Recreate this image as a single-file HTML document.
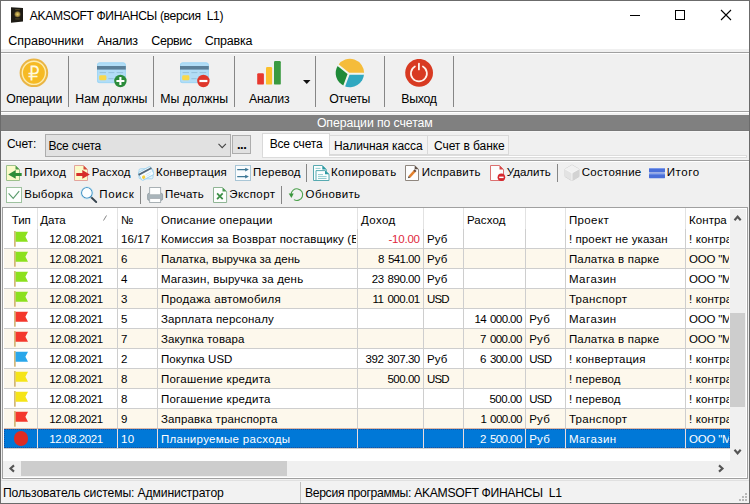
<!DOCTYPE html><html><head><meta charset="utf-8"><title>AKAMSOFT ФИНАНСЫ</title><style>
html,body{margin:0;padding:0;background:#fff}
#w{position:relative;width:750px;height:504px;overflow:hidden;font-family:"Liberation Sans", sans-serif;font-size:11.5px}
#w>div,#w>svg,#w>span{position:absolute;display:block}
#w>span{white-space:pre;line-height:14px;height:14px}
</style></head><body><div id="w">
<div style="left:0px;top:0px;width:750px;height:504px;background:#fff;"></div>
<div style="left:1px;top:49px;width:748px;height:3px;background:#f0f0f0;"></div>
<div style="left:1px;top:52px;width:748px;height:1px;background:#a0a0a0;"></div>
<div style="left:1px;top:53px;width:748px;height:1px;background:#ffffff;"></div>
<div style="left:1px;top:54px;width:748px;height:57px;background:#f0f0f0;"></div>
<div style="left:1px;top:111px;width:748px;height:1px;background:#a0a0a0;"></div>
<div style="left:1px;top:112px;width:748px;height:1px;background:#ffffff;"></div>
<div style="left:1px;top:113px;width:748px;height:391px;background:#f0f0f0;"></div>
<div style="left:68px;top:56px;width:1px;height:51px;background:#868686;"></div>
<div style="left:153px;top:56px;width:1px;height:51px;background:#868686;"></div>
<div style="left:234px;top:56px;width:1px;height:51px;background:#868686;"></div>
<div style="left:315px;top:56px;width:1px;height:51px;background:#868686;"></div>
<div style="left:384px;top:56px;width:1px;height:51px;background:#868686;"></div>
<div style="left:453px;top:56px;width:1px;height:51px;background:#868686;"></div>
<div style="left:1px;top:115px;width:748px;height:16px;background:#808080;"></div>
<div style="left:1px;top:130px;width:748px;height:1px;background:#787878;"></div>
<div style="left:1px;top:131px;width:748px;height:1px;background:#f6f6f6;"></div>
<div style="left:45px;top:134px;width:186px;height:23px;background:#e1e1e1;border:1px solid #adadad;box-sizing:border-box;"></div>
<div style="left:232px;top:135px;width:19px;height:19px;background:#e1e1e1;border:1px solid #adadad;box-sizing:border-box;"></div>
<div style="left:262px;top:133px;width:68px;height:24px;background:#ffffff;border:1px solid #d9d9d9;border-bottom:none;box-sizing:border-box;"></div>
<div style="left:330px;top:135px;width:98px;height:20px;background:#f3f3f3;border:1px solid #d9d9d9;border-left:none;box-sizing:border-box;"></div>
<div style="left:428px;top:135px;width:81px;height:20px;background:#f3f3f3;border:1px solid #d9d9d9;border-left:none;box-sizing:border-box;"></div>
<div style="left:330px;top:155px;width:417px;height:1px;background:#dcdcdc;"></div>
<div style="left:262px;top:156px;width:484px;height:1px;background:#ffffff;"></div>
<div style="left:262px;top:157px;width:485px;height:1px;background:#dcdcdc;"></div>
<div style="left:746px;top:155px;width:1px;height:3px;background:#dcdcdc;"></div>
<div style="left:262px;top:155px;width:1px;height:3px;background:#dcdcdc;"></div>
<div style="left:1px;top:160px;width:748px;height:1px;background:#a0a0a0;"></div>
<div style="left:1px;top:161px;width:748px;height:1px;background:#ffffff;"></div>
<div style="left:306px;top:164px;width:1px;height:18px;background:#868686;"></div>
<div style="left:557px;top:164px;width:1px;height:18px;background:#868686;"></div>
<div style="left:140px;top:186px;width:1px;height:18px;background:#868686;"></div>
<div style="left:281px;top:186px;width:1px;height:18px;background:#868686;"></div>
<div style="left:2px;top:207px;width:746px;height:272px;background:#a0a0a0;"></div>
<div style="left:3px;top:208px;width:744px;height:270px;background:#ffffff;"></div>
<div style="left:4px;top:249px;width:726px;height:19px;background:#fdf8ec;"></div>
<div style="left:4px;top:289px;width:726px;height:19px;background:#fdf8ec;"></div>
<div style="left:4px;top:329px;width:726px;height:19px;background:#fdf8ec;"></div>
<div style="left:4px;top:369px;width:726px;height:19px;background:#fdf8ec;"></div>
<div style="left:4px;top:409px;width:726px;height:19px;background:#fdf8ec;"></div>
<div style="left:4px;top:429px;width:726px;height:19px;background:#0078d7;"></div>
<div style="left:4px;top:248px;width:726px;height:1px;background:#cecece;"></div>
<div style="left:4px;top:268px;width:726px;height:1px;background:#cecece;"></div>
<div style="left:4px;top:288px;width:726px;height:1px;background:#cecece;"></div>
<div style="left:4px;top:308px;width:726px;height:1px;background:#cecece;"></div>
<div style="left:4px;top:328px;width:726px;height:1px;background:#cecece;"></div>
<div style="left:4px;top:348px;width:726px;height:1px;background:#cecece;"></div>
<div style="left:4px;top:368px;width:726px;height:1px;background:#cecece;"></div>
<div style="left:4px;top:388px;width:726px;height:1px;background:#cecece;"></div>
<div style="left:4px;top:408px;width:726px;height:1px;background:#cecece;"></div>
<div style="left:4px;top:428px;width:726px;height:1px;background:#cecece;"></div>
<div style="left:4px;top:448px;width:726px;height:1px;background:#cecece;"></div>
<div style="left:37px;top:208px;width:1px;height:21px;background:#e2e2e2;"></div>
<div style="left:37px;top:229px;width:1px;height:220px;background:#cecece;"></div>
<div style="left:117px;top:208px;width:1px;height:21px;background:#e2e2e2;"></div>
<div style="left:117px;top:229px;width:1px;height:220px;background:#cecece;"></div>
<div style="left:157px;top:208px;width:1px;height:21px;background:#e2e2e2;"></div>
<div style="left:157px;top:229px;width:1px;height:220px;background:#cecece;"></div>
<div style="left:357px;top:208px;width:1px;height:21px;background:#e2e2e2;"></div>
<div style="left:357px;top:229px;width:1px;height:220px;background:#cecece;"></div>
<div style="left:423px;top:208px;width:1px;height:21px;background:#e2e2e2;"></div>
<div style="left:423px;top:229px;width:1px;height:220px;background:#cecece;"></div>
<div style="left:463px;top:208px;width:1px;height:21px;background:#e2e2e2;"></div>
<div style="left:463px;top:229px;width:1px;height:220px;background:#cecece;"></div>
<div style="left:525px;top:208px;width:1px;height:21px;background:#e2e2e2;"></div>
<div style="left:525px;top:229px;width:1px;height:220px;background:#cecece;"></div>
<div style="left:565px;top:208px;width:1px;height:21px;background:#e2e2e2;"></div>
<div style="left:565px;top:229px;width:1px;height:220px;background:#cecece;"></div>
<div style="left:685px;top:208px;width:1px;height:21px;background:#e2e2e2;"></div>
<div style="left:685px;top:229px;width:1px;height:220px;background:#cecece;"></div>
<div style="left:4px;top:429px;width:726px;height:19px;background:transparent;border:1px dotted #1c4f9e;box-sizing:border-box;"></div>
<div style="left:4px;top:428px;width:726px;height:1px;background:#dcb8a8;"></div>
<div style="left:37px;top:429px;width:1px;height:19px;background:#ecdcdc;"></div>
<div style="left:117px;top:429px;width:1px;height:19px;background:#ecdcdc;"></div>
<div style="left:157px;top:429px;width:1px;height:19px;background:#ecdcdc;"></div>
<div style="left:357px;top:429px;width:1px;height:19px;background:#ecdcdc;"></div>
<div style="left:423px;top:429px;width:1px;height:19px;background:#ecdcdc;"></div>
<div style="left:463px;top:429px;width:1px;height:19px;background:#ecdcdc;"></div>
<div style="left:525px;top:429px;width:1px;height:19px;background:#ecdcdc;"></div>
<div style="left:565px;top:429px;width:1px;height:19px;background:#ecdcdc;"></div>
<div style="left:685px;top:429px;width:1px;height:19px;background:#ecdcdc;"></div>
<svg style="left:14px;top:231px" width="15" height="16" viewBox="0 0 15 16"><rect x="0.2" y="0" width="1.4" height="15.7" fill="#c9a85c"/><path d="M1.6 0.8 L14 0.8 L11.4 5.8 L14 10.8 L1.6 10.8 Z" fill="#8ce01e"/></svg>
<svg style="left:14px;top:251px" width="15" height="16" viewBox="0 0 15 16"><rect x="0.2" y="0" width="1.4" height="15.7" fill="#c9a85c"/><path d="M1.6 0.8 L14 0.8 L11.4 5.8 L14 10.8 L1.6 10.8 Z" fill="#8ce01e"/></svg>
<svg style="left:14px;top:271px" width="15" height="16" viewBox="0 0 15 16"><rect x="0.2" y="0" width="1.4" height="15.7" fill="#c9a85c"/><path d="M1.6 0.8 L14 0.8 L11.4 5.8 L14 10.8 L1.6 10.8 Z" fill="#8ce01e"/></svg>
<svg style="left:14px;top:291px" width="15" height="16" viewBox="0 0 15 16"><rect x="0.2" y="0" width="1.4" height="15.7" fill="#c9a85c"/><path d="M1.6 0.8 L14 0.8 L11.4 5.8 L14 10.8 L1.6 10.8 Z" fill="#8ce01e"/></svg>
<svg style="left:14px;top:311px" width="15" height="16" viewBox="0 0 15 16"><rect x="0.2" y="0" width="1.4" height="15.7" fill="#c9a85c"/><path d="M1.6 0.8 L14 0.8 L11.4 5.8 L14 10.8 L1.6 10.8 Z" fill="#f4382c"/></svg>
<svg style="left:14px;top:331px" width="15" height="16" viewBox="0 0 15 16"><rect x="0.2" y="0" width="1.4" height="15.7" fill="#c9a85c"/><path d="M1.6 0.8 L14 0.8 L11.4 5.8 L14 10.8 L1.6 10.8 Z" fill="#f4382c"/></svg>
<svg style="left:14px;top:351px" width="15" height="16" viewBox="0 0 15 16"><rect x="0.2" y="0" width="1.4" height="15.7" fill="#c9a85c"/><path d="M1.6 0.8 L14 0.8 L11.4 5.8 L14 10.8 L1.6 10.8 Z" fill="#2aa7ea"/></svg>
<svg style="left:14px;top:371px" width="15" height="16" viewBox="0 0 15 16"><rect x="0.2" y="0" width="1.4" height="15.7" fill="#c9a85c"/><path d="M1.6 0.8 L14 0.8 L11.4 5.8 L14 10.8 L1.6 10.8 Z" fill="#f5e418"/></svg>
<svg style="left:14px;top:391px" width="15" height="16" viewBox="0 0 15 16"><rect x="0.2" y="0" width="1.4" height="15.7" fill="#c9a85c"/><path d="M1.6 0.8 L14 0.8 L11.4 5.8 L14 10.8 L1.6 10.8 Z" fill="#f5e418"/></svg>
<svg style="left:14px;top:411px" width="15" height="16" viewBox="0 0 15 16"><rect x="0.2" y="0" width="1.4" height="15.7" fill="#c9a85c"/><path d="M1.6 0.8 L14 0.8 L11.4 5.8 L14 10.8 L1.6 10.8 Z" fill="#f4382c"/></svg>
<div style="left:13.6px;top:431.4px;width:14.4px;height:14.4px;border-radius:7.2px;background:#dc2c24"></div>
<div style="left:730px;top:209px;width:16px;height:252px;background:#f0f0f0;"></div>
<div style="left:730px;top:313px;width:15px;height:94px;background:#cdcdcd;"></div>
<svg style="left:733px;top:214px" width="9" height="8" viewBox="0 0 9 8"><path d="M1.5 6.2 L4.6 2.7 L7.7 6.2" stroke="#555" stroke-width="2.1" fill="none"/></svg>
<svg style="left:733px;top:448px" width="9" height="8" viewBox="0 0 9 8"><path d="M1.5 1.8 L4.6 5.3 L7.7 1.8" stroke="#555" stroke-width="2.1" fill="none"/></svg>
<div style="left:3px;top:461px;width:743px;height:16px;background:#f0f0f0;"></div>
<div style="left:21px;top:461px;width:266px;height:15px;background:#cdcdcd;"></div>
<svg style="left:8px;top:464px" width="8" height="9" viewBox="0 0 8 9"><path d="M6 1.4 L2.5 4.5 L6 7.6" stroke="#555" stroke-width="2.1" fill="none"/></svg>
<svg style="left:717px;top:464px" width="8" height="9" viewBox="0 0 8 9"><path d="M2 1.4 L5.5 4.5 L2 7.6" stroke="#555" stroke-width="2.1" fill="none"/></svg>
<div style="left:1px;top:479px;width:748px;height:25px;background:#f2f2f2;"></div>
<div style="left:1px;top:480px;width:748px;height:1px;background:#e0e0e0;"></div>
<div style="left:300px;top:482px;width:1px;height:21px;background:#c0c0c0;"></div>
<svg style="left:11px;top:7px" width="13" height="16" viewBox="0 0 13 16"><defs><radialGradient id="gd"><stop offset="0" stop-color="#e6d070"/><stop offset="0.6" stop-color="#a89040"/><stop offset="1" stop-color="#3a3220"/></radialGradient></defs><path d="M0 0.2 L12 1 V14.6 L0 15.7 Z" fill="#1d1b15"/><circle cx="6.5" cy="7.3" r="3.3" fill="url(#gd)"/><rect x="4.2" y="2.4" width="4.6" height="0.7" fill="#6a5c30"/><rect x="4.2" y="11.6" width="4.6" height="0.7" fill="#6a5c30"/></svg>
<svg style="left:625px;top:5px" width="120" height="20" viewBox="0 0 120 20"><path d="M5 10.5 H15" stroke="#000" stroke-width="1"/><rect x="50.5" y="5.5" width="9" height="9" fill="none" stroke="#000" stroke-width="1"/><path d="M96 5 L106 15 M106 5 L96 15" stroke="#000" stroke-width="1.1"/></svg>
<svg style="left:19px;top:58px" width="30" height="30" viewBox="0 0 30 30"><circle cx="14.9" cy="14.8" r="14.3" fill="#eab544"/><circle cx="14.9" cy="14.8" r="11.6" fill="#f6ba24" stroke="#fdedb0" stroke-width="1.4"/><text x="0" y="22" font-family="DejaVu Sans, sans-serif" font-weight="200" font-size="19.6" fill="#fff9dc" stroke="#fff9dc" stroke-width="0.9" transform="translate(9.6 0) scale(0.88 1)">₽</text></svg>
<svg style="left:96.6px;top:62px" width="31" height="27" viewBox="0 0 31 27"><rect x="0" y="0.4" width="28.8" height="20.7" rx="2.6" fill="#b2ddf6"/><rect x="0.4" y="0.8" width="28" height="19.9" rx="2.3" fill="none" stroke="#9ad4f4" stroke-width="0.8"/><rect x="0" y="4" width="28.8" height="3.6" fill="#5b7f98"/><rect x="2.2" y="13.3" width="7.2" height="5" rx="1.4" fill="#f8d84a"/><path d="M2.6 10.6 H9 M11.4 10.6 H17.4 M19.6 10.6 H26.2 M11.4 16.7 H16.6" stroke="#8fbcd8" stroke-width="0.9"/><circle cx="23.4" cy="19" r="6.2" fill="#2b8c3b"/><path d="M23.4 15 V23 M19.4 19 H27.4" stroke="#fff" stroke-width="2.1"/></svg>
<svg style="left:179.6px;top:62px" width="31" height="27" viewBox="0 0 31 27"><rect x="0" y="0.4" width="28.8" height="20.7" rx="2.6" fill="#b2ddf6"/><rect x="0.4" y="0.8" width="28" height="19.9" rx="2.3" fill="none" stroke="#9ad4f4" stroke-width="0.8"/><rect x="0" y="4" width="28.8" height="3.6" fill="#5b7f98"/><rect x="2.2" y="13.3" width="7.2" height="5" rx="1.4" fill="#f8d84a"/><path d="M2.6 10.6 H9 M11.4 10.6 H17.4 M19.6 10.6 H26.2 M11.4 16.7 H16.6" stroke="#8fbcd8" stroke-width="0.9"/><circle cx="23.4" cy="19" r="6.2" fill="#df372b"/><path d="M19.4 19 H27.4" stroke="#fff" stroke-width="2.2"/></svg>
<svg style="left:256px;top:60px" width="26" height="26" viewBox="0 0 26 26"><rect x="1.2" y="13.2" width="6.7" height="11.4" rx="1.2" fill="#e8382e"/><rect x="10" y="7" width="6.1" height="17.6" rx="1.2" fill="#fbc02d"/><rect x="18" y="1.1" width="6.8" height="23.5" rx="1.2" fill="#3a9a40"/></svg>
<svg style="left:302.8px;top:80px" width="8" height="5" viewBox="0 0 8 5"><path d="M0 0 H7.5 L3.75 4.1 Z" fill="#111"/></svg>
<svg style="left:335px;top:58px" width="30" height="30" viewBox="0 0 30 30"><path d="M13.8 15.7 L3.07 7.15 A14.2 14.2 0 0 1 29.08 15.7 Z" fill="#f5bc3a"/><path d="M13.8 15.7 L9.18 27.99 A14.2 14.2 0 0 1 3.07 7.15 Z" fill="#1e8a38"/><path d="M13.8 15.7 L29.08 15.7 A14.2 14.2 0 0 1 9.18 27.99 Z" fill="#30a8c0"/><path d="M13.8 15.7 L2.6 6.8 M13.8 15.7 H29.6 M13.8 15.7 L9 28.5" stroke="#f1f5f0" stroke-width="2.1"/></svg>
<svg style="left:405px;top:59px" width="29" height="28" viewBox="0 0 29 28"><circle cx="14.1" cy="13.8" r="13.9" fill="#d83a22"/><path d="M9.9 7.5 A8 8 0 1 0 17.9 7.5" stroke="#fff3ec" stroke-width="1.7" fill="none" stroke-linecap="round"/><path d="M13.9 4.6 V10.4" stroke="#fff3ec" stroke-width="1.8" stroke-linecap="round"/></svg>
<svg style="left:218px;top:143px" width="9" height="6" viewBox="0 0 9 6"><path d="M0.5 0.9 L4.2 4.6 L7.9 0.9" stroke="#444" stroke-width="1.1" fill="none"/></svg>
<svg style="left:103px;top:215px" width="4" height="6" viewBox="0 0 4 6"><path d="M0.5 5.5 L3.5 0.5" stroke="#777" stroke-width="0.9"/></svg>
<svg style="left:738px;top:492px" width="10" height="10" viewBox="0 0 10 10"><g fill="#b8b8b8"><rect x="7" y="1" width="2" height="2"/><rect x="4" y="4" width="2" height="2"/><rect x="7" y="4" width="2" height="2"/><rect x="1" y="7" width="2" height="2"/><rect x="4" y="7" width="2" height="2"/><rect x="7" y="7" width="2" height="2"/></g></svg>
<svg style="left:6px;top:165px" width="17" height="16" viewBox="0 0 17 16"><path d="M0.5 0.5 H9.5 L13.5 4.5 V15.5 H0.5 Z" fill="#fbfbc8" stroke="#9cc08c"/><path d="M9.5 0.5 V4.5 H13.5 Z" fill="#4a9a48"/><path d="M2.2 9.4 L9.7 5 V7.9 H15.7 V11 H9.7 V13.8 Z" fill="#2e8e36"/></svg>
<svg style="left:74px;top:165px" width="17" height="16" viewBox="0 0 17 16"><path d="M0.5 0.5 H9.5 L13.5 4.5 V15.5 H0.5 Z" fill="#fbfbc8" stroke="#e4a49c"/><path d="M9.5 0.5 V4.5 H13.5 Z" fill="#d4463c"/><path d="M15.8 9.4 L8.3 5 V7.9 H2.3 V11 H8.3 V13.8 Z" fill="#d62e2a"/></svg>
<svg style="left:137px;top:164px" width="18" height="18" viewBox="0 0 18 18"><rect x="2" y="4.8" width="14" height="10" rx="1.5" fill="#e3f3fb" stroke="#9fd3ee" stroke-width="0.9"/><g transform="rotate(-28 9 9.5)"><rect x="2.2" y="5" width="13.8" height="9" rx="1.4" fill="#f7fcff" stroke="#9fd3ee" stroke-width="0.9"/><rect x="1.8" y="6.3" width="14.6" height="1.8" fill="#54697a"/><circle cx="5.2" cy="11.6" r="1.7" fill="#f6cf3e"/><path d="M8 10.4 H14.5 M8 12.2 H12.5" stroke="#c6e3f2" stroke-width="0.8"/></g></svg>
<svg style="left:235px;top:165px" width="16" height="16" viewBox="0 0 16 16"><rect x="0.5" y="0.5" width="15" height="15" fill="#f9fcfe" stroke="#a9c6d6"/><path d="M2.2 4.6 H11 M2.2 11.6 H11" stroke="#3e7896" stroke-width="1.1"/><path d="M10.2 2.7 L13.9 4.6 L10.2 6.5 Z M10.2 9.7 L13.9 11.6 L10.2 13.5 Z" fill="#3e7896"/></svg>
<svg style="left:313px;top:165px" width="17" height="16" viewBox="0 0 17 16"><path d="M0.5 0.5 H9.3 L13.3 4.5 V15.5 H0.5 Z" fill="#fbfefe" stroke="#58aab1"/><path d="M9.3 0.5 V4.5 H13.3 Z" fill="#2c9aa3"/><path d="M2.5 3.4 H7.5" stroke="#86c6cb" stroke-width="0.9"/><path d="M3 5.6 H12 L16 9.2 V15.5 H3 Z" fill="#fbfefe" stroke="#58aab1"/><path d="M12 5.6 V9.2 H16 Z" fill="#2c9aa3"/><path d="M5 9.6 H10 M5 11.6 H13.6 M5 13.5 H13.6" stroke="#86c6cb" stroke-width="0.9"/></svg>
<svg style="left:405px;top:165px" width="15" height="16" viewBox="0 0 15 16"><path d="M0.5 0.5 H9.7 L13.5 4.3 V15.5 H0.5 Z" fill="#fdfdfd" stroke="#8f867e"/><path d="M9.7 0.5 V4.3 H13.5 Z" fill="#5e4e44"/><path d="M4.4 11.8 L9.6 6.2" stroke="#e2812e" stroke-width="2.5"/><path d="M9.3 6.5 L10.6 5.1" stroke="#6a4a3a" stroke-width="2.5"/><path d="M2.9 13.3 L3.7 11.1 L5.2 12.5 Z" fill="#4a3a30"/></svg>
<svg style="left:490px;top:165px" width="16" height="17" viewBox="0 0 16 17"><path d="M0.5 0.5 H9.5 L13.5 4.5 V15.5 H0.5 Z" fill="#fdfdfd" stroke="#dc7070"/><path d="M9.5 0.5 V4.5 H13.5 Z" fill="#d64848"/><circle cx="11.4" cy="12.3" r="3.8" fill="#d5282e"/><rect x="9.2" y="11.6" width="4.4" height="1.5" fill="#fff"/></svg>
<svg style="left:564px;top:164px" width="16" height="18" viewBox="0 0 16 18"><path d="M8 1 L15 5 V12.6 L8 16.8 L1 12.6 V5 Z" fill="#dedede" stroke="#cdcdcd" stroke-width="0.9"/><path d="M8 1 L15 5 L8 9 L1 5 Z" fill="#f1f1f1"/><path d="M8 9 V16.8 L15 12.6 V5 Z" fill="#d3d3d3"/><path d="M1 5 L8 9 V16.8 L1 12.6 Z" fill="#e3e3e3"/><path d="M1 5 L8 9 L15 5 M8 9 V16.8" fill="none" stroke="#fafafa" stroke-width="0.8"/></svg>
<svg style="left:649px;top:167px" width="16" height="12" viewBox="0 0 16 12"><rect x="0" y="1" width="16" height="4.4" rx="0.6" fill="#4a6fd9"/><rect x="0" y="6.6" width="16" height="4.6" rx="0.6" fill="#4a6fd9"/><rect x="0" y="1" width="16" height="1" fill="#7a98ea"/><rect x="0" y="6.6" width="16" height="1" fill="#7a98ea"/></svg>
<svg style="left:6px;top:187px" width="16" height="16" viewBox="0 0 16 16"><rect x="0.5" y="0.5" width="15" height="15" fill="#fdfffd" stroke="#9fc2a0"/><path d="M2.6 6.3 L7.2 11.4 L13.2 4.2" stroke="#5a9c6c" stroke-width="1.1" fill="none"/></svg>
<svg style="left:80px;top:186px" width="18" height="18" viewBox="0 0 18 18"><path d="M10.9 11 L16.2 16" stroke="#36434e" stroke-width="1.9" stroke-linecap="round"/><circle cx="6.9" cy="6.9" r="5.4" fill="#fbfeff" stroke="#3b8cc0" stroke-width="1.1"/><circle cx="6.9" cy="6.9" r="6.2" fill="none" stroke="#bfe9fa" stroke-width="0.6"/></svg>
<svg style="left:147px;top:187px" width="17" height="16" viewBox="0 0 17 16"><rect x="0.6" y="6.2" width="15" height="7.2" rx="1.6" fill="#a9b5bb" stroke="#8d999f" stroke-width="0.8"/><rect x="2.6" y="0.5" width="11" height="7.3" fill="#fdfefe" stroke="#a9b1b5"/><rect x="2.6" y="11.4" width="11" height="4.1" fill="#fdfefe" stroke="#a9b1b5"/></svg>
<svg style="left:213px;top:187px" width="15" height="17" viewBox="0 0 15 17"><path d="M0.5 0.5 H9.5 L13.6 4.5 V15.5 H0.5 Z" fill="#fdfefd" stroke="#8fb595"/><path d="M9.5 0.5 V4.5 H13.6 Z" fill="#4a9a50"/><path d="M4.1 6.4 L9.7 12.1 M9.7 6.4 L4.1 12.1" stroke="#3a8e44" stroke-width="1.7"/></svg>
<svg style="left:288px;top:187px" width="16" height="16" viewBox="0 0 16 16"><path d="M3.1 7.6 A5.8 5.8 0 1 1 5.9 12.6" stroke="#4ea24e" stroke-width="1.1" fill="none"/><path d="M0.7 6.4 L5.7 6.6 L3.4 10.9 Z" fill="#3c963e"/></svg>
<div style="left:0px;top:0px;width:750px;height:1px;background:#6b6b6b;"></div>
<div style="left:0px;top:0px;width:1px;height:504px;background:#6b6b6b;"></div>
<div style="left:749px;top:0px;width:1px;height:504px;background:#6b6b6b;"></div>
<div style="left:0px;top:503px;width:750px;height:1px;background:#6b6b6b;"></div>
<span style="top:34px;font-size:12.5px;letter-spacing:-0.030px;left:8.3px">Справочники</span>
<span style="top:34px;font-size:12.5px;letter-spacing:-0.301px;left:97.3px">Анализ</span>
<span style="top:34px;font-size:12.5px;letter-spacing:-0.402px;left:151.3px">Сервис</span>
<span style="top:34px;font-size:12.5px;letter-spacing:-0.235px;left:204.8px">Справка</span>
<span style="top:9px;font-size:12.1px;letter-spacing:-0.338px;left:29.8px">AKAMSOFT ФИНАНСЫ (версия  L1)</span>
<span style="top:92px;font-size:12.3px;letter-spacing:-0.204px;left:6.3px">Операции</span>
<span style="top:92px;font-size:12.3px;letter-spacing:-0.047px;left:75.3px">Нам должны</span>
<span style="top:92px;font-size:12.3px;letter-spacing:0.069px;left:160.3px">Мы должны</span>
<span style="top:92px;font-size:12.3px;letter-spacing:-0.186px;left:249.0px">Анализ</span>
<span style="top:92px;font-size:12.3px;letter-spacing:-0.286px;left:329.3px">Отчеты</span>
<span style="top:92px;font-size:12.3px;letter-spacing:-0.279px;left:401.3px">Выход</span>
<span style="top:116px;font-size:12.3px;color:#fff;letter-spacing:-0.094px;left:316.9px">Операции по счетам</span>
<span style="top:137px;font-size:12px;letter-spacing:-0.118px;left:6.9px">Счет:</span>
<span style="top:139px;font-size:12px;letter-spacing:-0.206px;left:48.5px">Все счета</span>
<span style="top:138px;font-size:13px;font-weight:bold;letter-spacing:-0.481px;left:236.9px">...</span>
<span style="top:137px;font-size:12px;letter-spacing:-0.195px;left:269.7px">Все счета</span>
<span style="top:139px;font-size:12px;letter-spacing:-0.050px;left:334.0px">Наличная касса</span>
<span style="top:139px;font-size:12px;letter-spacing:-0.072px;left:434.0px">Счет в банке</span>
<span style="top:165px;letter-spacing:0.440px;left:24.3px">Приход</span>
<span style="top:165px;letter-spacing:0.163px;left:91.8px">Расход</span>
<span style="top:165px;letter-spacing:0.205px;left:156.0px">Конвертация</span>
<span style="top:165px;letter-spacing:0.200px;left:253.0px">Перевод</span>
<span style="top:165px;letter-spacing:0.358px;left:331.0px">Копировать</span>
<span style="top:165px;letter-spacing:0.230px;left:421.8px">Исправить</span>
<span style="top:165px;letter-spacing:-0.001px;left:506.8px">Удалить</span>
<span style="top:165px;letter-spacing:0.257px;left:581.8px">Состояние</span>
<span style="top:165px;letter-spacing:0.552px;left:666.8px">Итого</span>
<span style="top:187px;letter-spacing:0.271px;left:24.3px">Выборка</span>
<span style="top:187px;letter-spacing:0.645px;left:99.3px">Поиск</span>
<span style="top:187px;letter-spacing:0.202px;left:165.1px">Печать</span>
<span style="top:187px;letter-spacing:0.412px;left:229.3px">Экспорт</span>
<span style="top:187px;letter-spacing:0.340px;left:305.6px">Обновить</span>
<span style="top:213px;letter-spacing:-0.057px;left:11.7px">Тип</span>
<span style="top:213px;letter-spacing:-0.017px;left:40.3px">Дата</span>
<span style="top:213px;letter-spacing:1.056px;left:120.9px">№</span>
<span style="top:213px;letter-spacing:0.261px;left:160.9px">Описание операции</span>
<span style="top:213px;letter-spacing:0.426px;left:360.9px">Доход</span>
<span style="top:213px;letter-spacing:0.146px;left:466.9px">Расход</span>
<span style="top:213px;letter-spacing:0.385px;left:568.9px">Проект</span>
<span style="top:213px;letter-spacing:0.031px;left:689.1px;width:38.4px;overflow:hidden">Контрагент</span>
<span style="top:232px;letter-spacing:-0.416px;left:49.3px">12.08.2021</span>
<span style="top:232px;letter-spacing:0.124px;left:120.9px">16/17</span>
<span style="top:232px;letter-spacing:0.144px;left:160.9px;width:194.7px;overflow:hidden">Комиссия за Возврат поставщику (Возврат)</span>
<span style="top:232px;color:#e0283c;word-spacing:1.3px;letter-spacing:-0.202px;left:388.4px">-10.00</span>
<span style="top:232px;letter-spacing:0.153px;left:426.9px">Руб</span>
<span style="top:232px;letter-spacing:0.116px;left:568.9px">! проект не указан</span>
<span style="top:232px;letter-spacing:0.090px;left:689.1px;width:39.9px;overflow:hidden">! контрагент</span>
<span style="top:252px;letter-spacing:-0.416px;left:49.3px">12.08.2021</span>
<span style="top:252px;letter-spacing:1.194px;left:120.9px">6</span>
<span style="top:252px;letter-spacing:0.032px;left:160.9px">Палатка, выручка за день</span>
<span style="top:252px;word-spacing:1.3px;letter-spacing:-0.547px;left:378.1px">8 541.00</span>
<span style="top:252px;letter-spacing:0.153px;left:426.9px">Руб</span>
<span style="top:252px;letter-spacing:0.190px;left:568.9px">Палатка в парке</span>
<span style="top:252px;letter-spacing:-0.245px;left:689.1px;width:39.9px;overflow:hidden">ООО "Мир"</span>
<span style="top:272px;letter-spacing:-0.416px;left:49.3px">12.08.2021</span>
<span style="top:272px;letter-spacing:1.194px;left:120.9px">4</span>
<span style="top:272px;letter-spacing:0.170px;left:160.9px">Магазин, выручка за день</span>
<span style="top:272px;word-spacing:1.3px;letter-spacing:-0.497px;left:371.8px">23 890.00</span>
<span style="top:272px;letter-spacing:0.153px;left:426.9px">Руб</span>
<span style="top:272px;letter-spacing:0.489px;left:568.9px">Магазин</span>
<span style="top:272px;letter-spacing:-0.245px;left:689.1px;width:39.9px;overflow:hidden">ООО "Мир"</span>
<span style="top:292px;letter-spacing:-0.416px;left:49.3px">12.08.2021</span>
<span style="top:292px;letter-spacing:1.194px;left:120.9px">3</span>
<span style="top:292px;letter-spacing:0.270px;left:160.9px">Продажа автомобиля</span>
<span style="top:292px;word-spacing:1.3px;letter-spacing:-0.468px;left:372.4px">11 000.01</span>
<span style="top:292px;letter-spacing:-0.760px;left:426.9px">USD</span>
<span style="top:292px;letter-spacing:0.343px;left:568.9px">Транспорт</span>
<span style="top:292px;letter-spacing:0.090px;left:689.1px;width:39.9px;overflow:hidden">! контрагент</span>
<span style="top:312px;letter-spacing:-0.416px;left:49.3px">12.08.2021</span>
<span style="top:312px;letter-spacing:1.194px;left:120.9px">5</span>
<span style="top:312px;letter-spacing:0.169px;left:160.9px">Зарплата персоналу</span>
<span style="top:312px;word-spacing:1.3px;letter-spacing:-0.563px;left:474.4px">14 000.00</span>
<span style="top:312px;letter-spacing:0.153px;left:529.3px">Руб</span>
<span style="top:312px;letter-spacing:0.489px;left:568.9px">Магазин</span>
<span style="top:312px;letter-spacing:-0.245px;left:689.1px;width:39.9px;overflow:hidden">ООО "Мир"</span>
<span style="top:332px;letter-spacing:-0.416px;left:49.3px">12.08.2021</span>
<span style="top:332px;letter-spacing:1.194px;left:120.9px">7</span>
<span style="top:332px;letter-spacing:0.110px;left:160.9px">Закупка товара</span>
<span style="top:332px;word-spacing:1.3px;letter-spacing:-0.547px;left:480.1px">7 000.00</span>
<span style="top:332px;letter-spacing:0.153px;left:529.3px">Руб</span>
<span style="top:332px;letter-spacing:0.190px;left:568.9px">Палатка в парке</span>
<span style="top:332px;letter-spacing:-0.245px;left:689.1px;width:39.9px;overflow:hidden">ООО "Мир"</span>
<span style="top:352px;letter-spacing:-0.416px;left:49.3px">12.08.2021</span>
<span style="top:352px;letter-spacing:1.194px;left:120.9px">2</span>
<span style="top:352px;letter-spacing:0.057px;left:160.9px">Покупка USD</span>
<span style="top:352px;word-spacing:1.3px;letter-spacing:-0.456px;left:365.5px">392 307.30</span>
<span style="top:352px;letter-spacing:0.153px;left:426.9px">Руб</span>
<span style="top:352px;word-spacing:1.3px;letter-spacing:-0.547px;left:480.1px">6 300.00</span>
<span style="top:352px;letter-spacing:-0.760px;left:529.3px">USD</span>
<span style="top:352px;letter-spacing:0.247px;left:568.9px">! конвертация</span>
<span style="top:352px;letter-spacing:0.090px;left:689.1px;width:39.9px;overflow:hidden">! контрагент</span>
<span style="top:372px;letter-spacing:-0.416px;left:49.3px">12.08.2021</span>
<span style="top:372px;letter-spacing:1.194px;left:120.9px">8</span>
<span style="top:372px;letter-spacing:0.274px;left:160.9px">Погашение кредита</span>
<span style="top:372px;word-spacing:1.3px;letter-spacing:-0.465px;left:387.4px">500.00</span>
<span style="top:372px;letter-spacing:-0.760px;left:426.9px">USD</span>
<span style="top:372px;letter-spacing:0.129px;left:568.9px">! перевод</span>
<span style="top:372px;letter-spacing:0.090px;left:689.1px;width:39.9px;overflow:hidden">! контрагент</span>
<span style="top:392px;letter-spacing:-0.416px;left:49.3px">12.08.2021</span>
<span style="top:392px;letter-spacing:1.194px;left:120.9px">8</span>
<span style="top:392px;letter-spacing:0.274px;left:160.9px">Погашение кредита</span>
<span style="top:392px;word-spacing:1.3px;letter-spacing:-0.465px;left:489.4px">500.00</span>
<span style="top:392px;letter-spacing:-0.760px;left:529.3px">USD</span>
<span style="top:392px;letter-spacing:0.129px;left:568.9px">! перевод</span>
<span style="top:392px;letter-spacing:0.090px;left:689.1px;width:39.9px;overflow:hidden">! контрагент</span>
<span style="top:412px;letter-spacing:-0.416px;left:49.3px">12.08.2021</span>
<span style="top:412px;letter-spacing:1.194px;left:120.9px">9</span>
<span style="top:412px;letter-spacing:0.147px;left:160.9px">Заправка транспорта</span>
<span style="top:412px;word-spacing:1.3px;letter-spacing:-0.585px;left:480.4px">1 000.00</span>
<span style="top:412px;letter-spacing:0.153px;left:529.3px">Руб</span>
<span style="top:412px;letter-spacing:0.343px;left:568.9px">Транспорт</span>
<span style="top:412px;letter-spacing:0.090px;left:689.1px;width:39.9px;overflow:hidden">! контрагент</span>
<span style="top:432px;color:#fff;letter-spacing:-0.416px;left:49.3px">12.08.2021</span>
<span style="top:432px;color:#fff;letter-spacing:0.502px;left:120.9px">10</span>
<span style="top:432px;color:#fff;letter-spacing:0.311px;left:160.9px">Планируемые расходы</span>
<span style="top:432px;color:#fff;word-spacing:1.3px;letter-spacing:-0.547px;left:480.1px">2 500.00</span>
<span style="top:432px;color:#fff;letter-spacing:0.153px;left:529.3px">Руб</span>
<span style="top:432px;color:#fff;letter-spacing:0.489px;left:568.9px">Магазин</span>
<span style="top:432px;color:#fff;letter-spacing:-0.245px;left:689.1px;width:39.9px;overflow:hidden">ООО "Мир"</span>
<span style="top:486px;font-size:12.2px;letter-spacing:-0.136px;left:2.9px">Пользователь системы: Администратор</span>
<span style="top:486px;font-size:12.2px;letter-spacing:-0.319px;left:304.9px">Версия программы: AKAMSOFT ФИНАНСЫ  L1</span>
</div></body></html>
